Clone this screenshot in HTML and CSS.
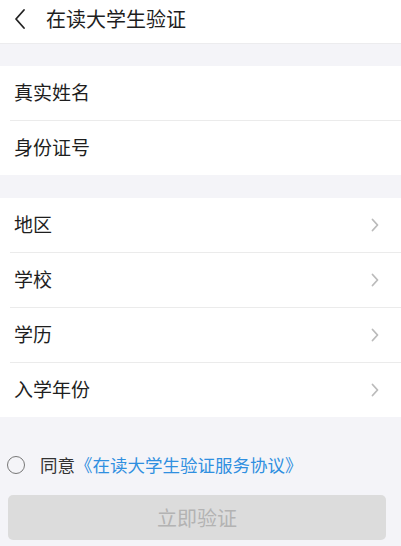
FILE: index.html
```html
<!DOCTYPE html>
<html lang="zh-CN">
<head>
<meta charset="utf-8">
<title>在读大学生验证</title>
<link rel="stylesheet" href="styles.css">
</head>
<body>
<div class="page">
  <header class="nav">
    <svg class="back" width="14" height="22" viewBox="0 0 14 22"><path d="M11 2 L3 11 L11 20" fill="none" stroke="#222" stroke-width="1.8" stroke-linecap="round" stroke-linejoin="round"/></svg>
    <span class="title">在读大学生验证</span>
  </header>

  <section class="group first">
    <div class="row"><span class="label">真实姓名</span></div>
    <div class="row"><span class="label">身份证号</span></div>
  </section>

  <section class="group">
    <div class="row"><span class="label">地区</span><svg class="chev" width="8" height="14" viewBox="0 0 8 14"><path d="M1.5 1.5 L6.5 7 L1.5 12.5" fill="none" stroke="#bbbbbb" stroke-width="1.8" stroke-linecap="round" stroke-linejoin="round"/></svg></div>
    <div class="row"><span class="label">学校</span><svg class="chev" width="8" height="14" viewBox="0 0 8 14"><path d="M1.5 1.5 L6.5 7 L1.5 12.5" fill="none" stroke="#bbbbbb" stroke-width="1.8" stroke-linecap="round" stroke-linejoin="round"/></svg></div>
    <div class="row"><span class="label">学历</span><svg class="chev" width="8" height="14" viewBox="0 0 8 14"><path d="M1.5 1.5 L6.5 7 L1.5 12.5" fill="none" stroke="#bbbbbb" stroke-width="1.8" stroke-linecap="round" stroke-linejoin="round"/></svg></div>
    <div class="row"><span class="label">入学年份</span><svg class="chev" width="8" height="14" viewBox="0 0 8 14"><path d="M1.5 1.5 L6.5 7 L1.5 12.5" fill="none" stroke="#bbbbbb" stroke-width="1.8" stroke-linecap="round" stroke-linejoin="round"/></svg></div>
  </section>

  <div class="agree">
    <span class="radio"></span>
    <span class="agree-text">同意<a class="link">《在读大学生验证服务协议》</a></span>
  </div>

  <div class="btn-wrap">
    <button class="btn" type="button">立即验证</button>
  </div>
</div>
</body>
</html>
```
FILE: styles.css
```css
* { box-sizing: border-box; }
html, body {
  margin: 0;
  padding: 0;
  background: #f4f4f8;
}
body {
  font-family: "Noto Sans CJK SC", "Noto Sans", sans-serif;
  color: #222;
}
.page {
  width: 401px;
  min-height: 546px;
  background: #f4f4f8;
}
.nav {
  height: 44px;
  background: #fff;
  border-bottom: 1px solid #ececee;
  display: flex;
  align-items: center;
  padding-left: 13px;
  padding-bottom: 6px;
}
.back { display: block; margin-right: 19px; }
.title {
  font-size: 20px;
  line-height: 1;
  color: #1e1e1e;
}
.group {
  background: #fff;
  margin-top: 22px;
}
.group + .group { margin-top: 23px; }
.row {
  height: 55px;
  display: flex;
  align-items: center;
  justify-content: space-between;
  margin-left: 10px;
  padding-left: 4px;
  padding-right: 22px;
  padding-bottom: 3px;
  border-bottom: 1px solid #ebebeb;
}
.row:last-child { height: 54px; border-bottom: none; }
.label {
  font-size: 19px;
  line-height: 1;
  color: #1e1e1e;
}
.chev { display: block; margin-top: 3px; }
.agree {
  display: flex;
  align-items: center;
  padding-left: 7px;
  margin-top: 38px;
  height: 20px;
}
.radio {
  width: 18px;
  height: 18px;
  border: 1.5px solid #777;
  border-radius: 50%;
  margin-right: 15px;
  flex: none;
}
.agree-text {
  font-size: 17.5px;
  line-height: 1;
  color: #333;
}
.link { color: #2f8fe0; }
.btn-wrap {
  padding: 0 15px 0 8px;
  margin-top: 20px;
}
.btn {
  width: 100%;
  height: 45px;
  border: none;
  border-radius: 5px;
  background: #dcdcdc;
  color: #b3b3b3;
  font-family: "Noto Sans CJK SC", "Noto Sans", sans-serif;
  font-size: 20px;
  line-height: 1;
  padding: 0;
}
```
